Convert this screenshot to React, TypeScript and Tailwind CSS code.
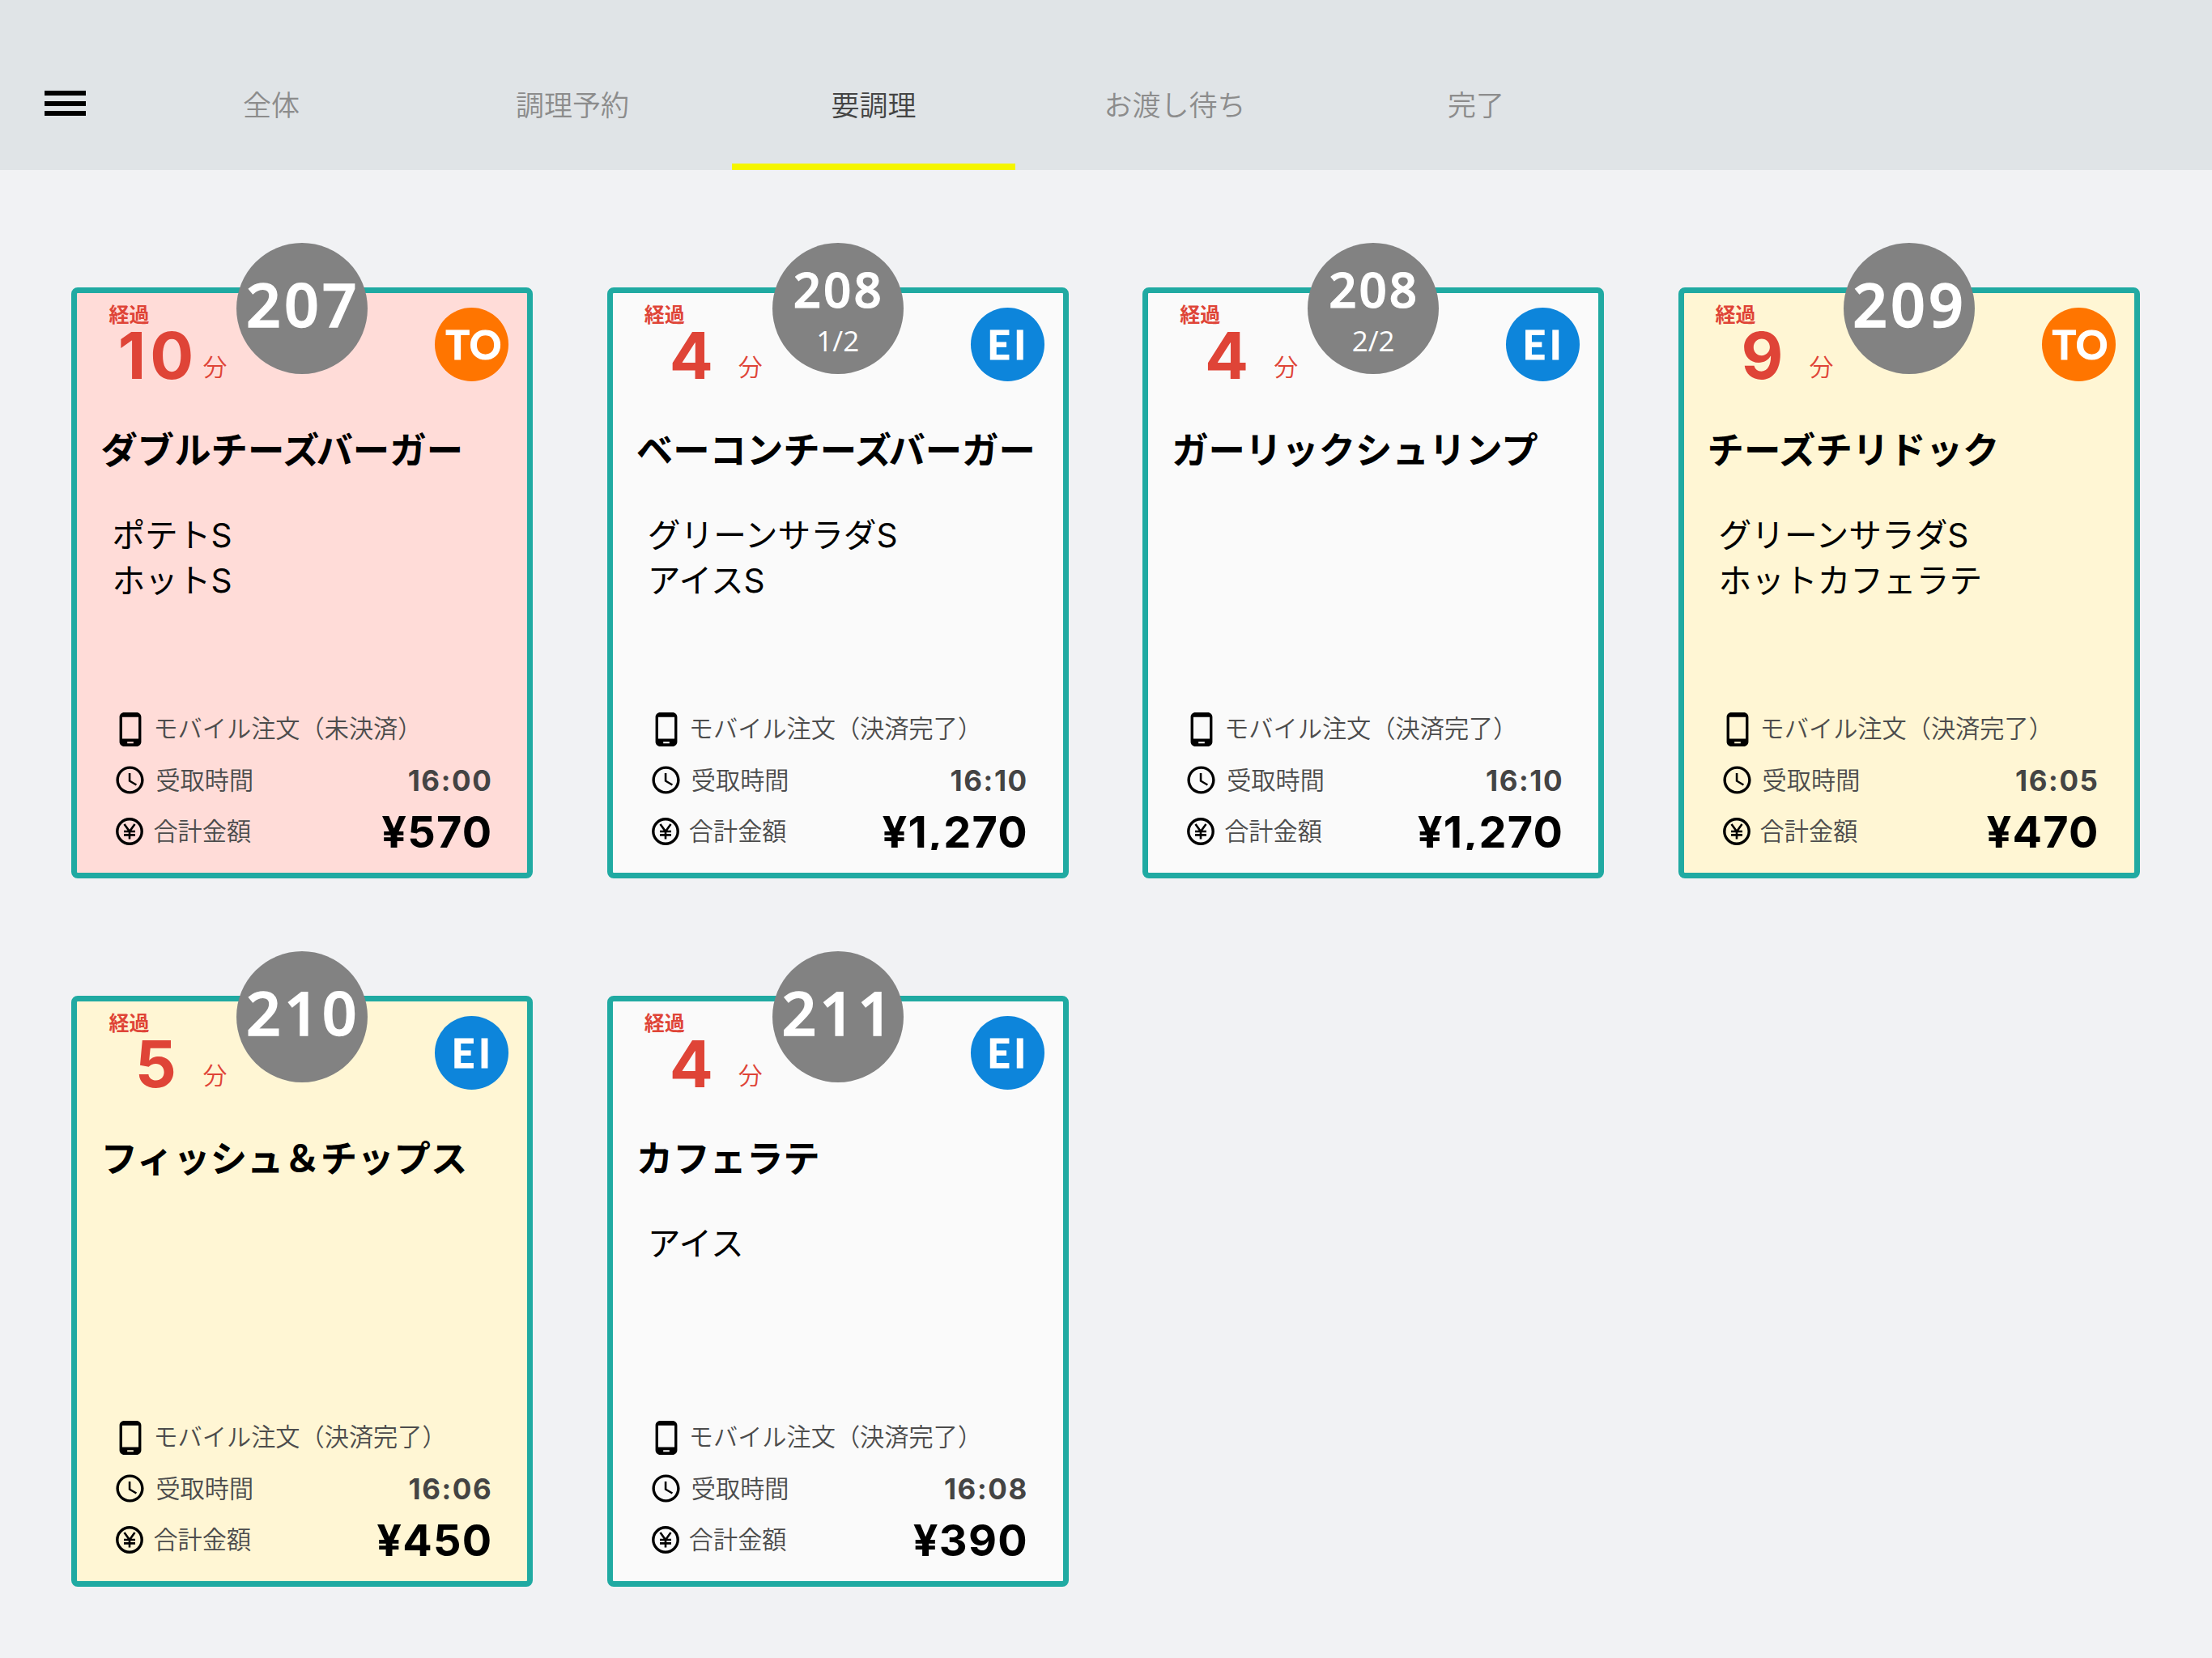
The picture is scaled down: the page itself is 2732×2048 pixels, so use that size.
import React from "react";
import { MdPhoneAndroid, MdAccessTime } from "react-icons/md";

type Order = {
  no: string;
  part?: string;
  minutes: number;
  type: "TO" | "EI";
  level: "normal" | "warn" | "alert";
  title: string[];
  options: string[];
  payment: string;
  time: string;
  total: string;
};

const orders: Order[] = [
  { no: "207", minutes: 10, type: "TO", level: "alert", title: ["ダブルチーズ", "バーガー"], options: ["ポテトS", "ホットS"], payment: "未決済", time: "16:00", total: "¥570" },
  { no: "208", part: "1/2", minutes: 4, type: "EI", level: "normal", title: ["ベーコンチーズ", "バーガー"], options: ["グリーンサラダS", "アイスS"], payment: "決済完了", time: "16:10", total: "¥1,270" },
  { no: "208", part: "2/2", minutes: 4, type: "EI", level: "normal", title: ["ガーリックシュリンプ"], options: [], payment: "決済完了", time: "16:10", total: "¥1,270" },
  { no: "209", minutes: 9, type: "TO", level: "warn", title: ["チーズチリドック"], options: ["グリーンサラダS", "ホットカフェラテ"], payment: "決済完了", time: "16:05", total: "¥470" },
  { no: "210", minutes: 5, type: "EI", level: "warn", title: ["フィッシュ＆チップス"], options: [], payment: "決済完了", time: "16:06", total: "¥450" },
  { no: "211", minutes: 4, type: "EI", level: "normal", title: ["カフェラテ"], options: ["アイス"], payment: "決済完了", time: "16:08", total: "¥390" },
];

const tabs = ["全体", "調理予約", "要調理", "お渡し待ち", "完了"];

const levelBg = { normal: "bg-[#fafafa]", warn: "bg-[#fff6d4]", alert: "bg-[#ffdcd8]" };
const typeStyle = {
  TO: "bg-[#ff7500] pl-[5px] tracking-[1px]",
  EI: "bg-[#0d85db] pl-[3px] tracking-[5px]",
};

function YenIcon() {
  return (
    <svg viewBox="0 0 34 34" className="size-[34px]" fill="none" stroke="#000">
      <circle cx="17" cy="17" r="15.2" strokeWidth="3.4" />
      <path d="M10.5 8 17 17l6.5-9M17 17v9.5M10 17h14M10 21.4h14" strokeWidth="2.6" />
    </svg>
  );
}

function Card({ order }: { order: Order }) {
  return (
    <article className={`relative flex h-[730px] w-[570px] flex-col rounded-lg border-7 border-[#20aaa2] ${levelBg[order.level]}`}>
      <div className="absolute top-[-62px] left-[197px] flex size-[162px] flex-col items-center rounded-full bg-[#828282] font-['Open_Sans'] text-white">
        {order.part ? (
          <>
            <span className="mt-[27px] pl-[2px] text-[60px] leading-[60px] font-semibold tracking-[3px] [-webkit-text-stroke:1.2px_white]">{order.no}</span>
            <span className="mt-[16px] text-[35px] leading-[36px]">{order.part}</span>
          </>
        ) : (
          <span className="mt-[38px] pl-[2px] text-[75px] leading-[75px] font-semibold tracking-[4px] [-webkit-text-stroke:1.6px_white]">{order.no}</span>
        )}
      </div>

      <div className="flex h-[155px] justify-between pr-[23px] pl-[39px] text-[#df4437]">
        <div className="flex flex-col">
          <span className="mt-[13px] text-[25px] leading-[25px] font-bold">経過</span>
          <div className="flex items-baseline">
            <span className="mt-[9px] w-[116px] pl-[5px] text-center font-['Inter'] text-[80px] leading-[60px] font-bold tracking-[5px]">{order.minutes}</span>
            <span className="relative top-[-4px] text-[30px] leading-[30px] font-[350]">分</span>
          </div>
        </div>
        <div className={`mt-[18px] flex size-[91px] items-center justify-center rounded-full font-['Lato'] text-[49px] leading-[49px] font-bold text-white [-webkit-text-stroke:1.2px_white] ${typeStyle[order.type]}`}>
          {order.type}
        </div>
      </div>

      <h2 className="mt-[10px] flex h-[52px] items-center pl-[29px] text-[45.4px] leading-[52px] font-bold whitespace-nowrap text-black">
        {order.title.map((part, i) => (
          <span key={part} className={i > 0 ? "ml-[-4px]" : ""}>{part}</span>
        ))}
      </h2>

      <ul className="mt-[55px] flex-1 pl-[43px] font-['Inter','Noto_Sans_CJK_JP',sans-serif] text-[40.7px] leading-[56px] font-[380] text-black">
        {order.options.map((option) => (
          <li key={option}>{option}</li>
        ))}
      </ul>

      <div className="mb-[20px] flex flex-col pr-[43px] text-[30.2px] text-[#4c4c4c]">
        <div className="flex h-[63px] items-center">
          <MdPhoneAndroid className="ml-[43px] size-[46px] text-black" />
          <span className="ml-[5px] pb-[3px] font-[350]">モバイル注文（{order.payment}）</span>
        </div>
        <div className="flex h-[63px] items-center">
          <MdAccessTime className="ml-[45px] size-[41px] text-black" />
          <span className="ml-[11px] pb-[2px] font-[350]">受取時間</span>
          <span className="ml-auto pt-px font-['Inter'] text-[35px] font-bold tracking-[1.6px] text-[#444]">{order.time}</span>
        </div>
        <div className="flex h-[63px] items-center">
          <span className="ml-[48px]"><YenIcon /></span>
          <span className="ml-[12px] pb-[2px] font-[350]">合計金額</span>
          <span className="ml-auto pt-[3px] font-['Inter'] text-[54px] leading-[64px] font-bold tracking-[1.2px] text-black [clip-path:inset(0_0_10px_0)]">{order.total}</span>
        </div>
      </div>
    </article>
  );
}

export default function App() {
  return (
    <div className="h-[2048px] w-[2732px] overflow-hidden bg-[#f1f2f4] font-['Noto_Sans_CJK_JP',sans-serif]">
      <header className="flex h-[210px] bg-[#e0e4e7]">
        <button className="mt-[112px] ml-[55px] flex h-[31px] w-[51px] flex-col justify-between">
          <span className="h-[6px] w-full bg-black" />
          <span className="h-[6px] w-full bg-black" />
          <span className="h-[6px] w-full bg-black" />
        </button>
        <nav className="ml-[54px] flex gap-[22px]">
          {tabs.map((tab) => (
            <div
              key={tab}
              className={`flex w-[350px] items-center justify-center border-b-8 pt-[54px] text-[35px] font-[350] ${tab === "要調理" ? "border-[#f5f500] text-[#444]" : "border-transparent text-[#8c8c8c]"}`}
            >
              {tab}
            </div>
          ))}
        </nav>
      </header>
      <main className="grid grid-cols-[repeat(4,570px)] gap-x-[91.4px] gap-y-[145px] pt-[145px] pl-[88.4px]">
        {orders.map((order, i) => (
          <Card key={i} order={order} />
        ))}
      </main>
    </div>
  );
}
